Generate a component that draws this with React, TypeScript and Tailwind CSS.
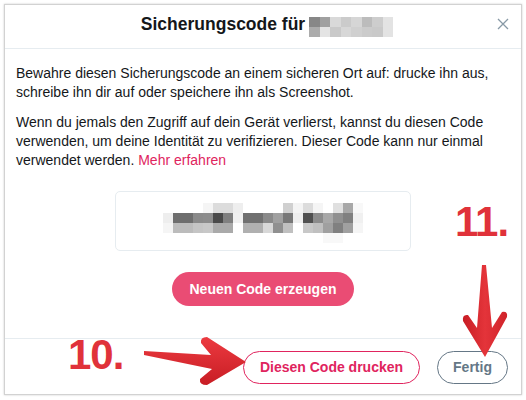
import React from "react";

const titleBlob: string[][] = [
  ["#878787", "#a0a0a0", "#d9d9d9", "#cbcbcb", "#d6d6d6", "#bcbcbc", "#cdcdcd", "#e3e3e3"],
  ["#ababab", "#e4e4e4", "#c9c9c9", "#d7d7d7", "#d0d0d0", "#cbcbcb", "#c9c9c9", "#e3e3e3"],
];

const codeBlob: string[][] = [
  ["#fff", "#fff", "#fff", "#fff", "#f5f5f5", "#dcdcdc", "#dcdcdc", "#eeeeee", "#fff", "#fff", "#fff", "#fff", "#d0d0d0", "#f4f4f4", "#dcdcdc", "#f5f5f5", "#fff", "#e0e0e0", "#a8a8a8", "#f8f8f8"],
  ["#eeeeee", "#6e6e6e", "#6e6e6e", "#8a8a8a", "#8c8c8c", "#4a4a4a", "#808080", "#f0f0f0", "#707070", "#707070", "#8a8a8a", "#a0a0a0", "#787878", "#eeeeee", "#505050", "#8c8c8c", "#a8a8a8", "#909090", "#808080", "#f0f0f0"],
  ["#f5f5f5", "#bcbcbc", "#bcbcbc", "#c5c5c5", "#c8c8c8", "#aaaaaa", "#aaaaaa", "#ffffff", "#b0b0b0", "#b0b0b0", "#d8d8d8", "#909090", "#c0c0c0", "#ffffff", "#c8c8c8", "#c0c0c0", "#a0a0a0", "#808080", "#a0a0a0", "#f5f5f5"],
  ["#fff", "#fff", "#fff", "#fff", "#fff", "#fff", "#fff", "#fff", "#fff", "#fff", "#fff", "#fff", "#fff", "#fff", "#fff", "#fff", "#f8f8f8", "#f8f8f8", "#fff", "#fff"],
];

function Blob({ rows, cw, ch }: { rows: string[][]; cw: number; ch: number }) {
  return (
    <div className="flex flex-col">
      {rows.map((r, i) => (
        <div key={i} className="flex">
          {r.map((c, j) => (
            <div key={j} style={{ width: cw, height: ch, background: c }} />
          ))}
        </div>
      ))}
    </div>
  );
}

export default function App() {
  return (
    <div className="relative w-[526px] h-[400px] bg-white overflow-hidden font-['Liberation_Sans',Arial,sans-serif] text-[#14171a]">
      <div className="ml-[4px] mt-[4px] w-[518px] h-[391px] border border-[#d2d2d2] shadow-[0_0_2px_rgba(0,0,0,0.2)] flex flex-col bg-white">
        {/* header */}
        <div className="h-[44px] shrink-0 border-b border-[#e6ecf0] grid grid-cols-[1fr_auto_1fr] items-center pb-[3px]">
          <div />
          <div className="flex items-center gap-[4px] pl-[8px]">
            <span className="text-[17.5px] font-bold leading-none">Sicherungscode für</span>
            <div className="mt-[4px]">
              <Blob rows={titleBlob} cw={10.5} ch={10} />
            </div>
          </div>
          <div className="flex justify-end pr-[12px]">
            <svg width="12" height="12" viewBox="0 0 12 12" className="-mt-[2px]">
              <path d="M1 1 L11 11 M11 1 L1 11" stroke="#8899a6" strokeWidth="1.3" fill="none" />
            </svg>
          </div>
        </div>

        {/* body */}
        <div className="flex-1 flex flex-col pl-[11px] pr-[11px] pt-[15px] text-[14px] leading-[19px]">
          <p>Bewahre diesen Sicherungscode an einem sicheren Ort auf: drucke ihn aus, schreibe ihn dir auf oder speichere ihn als Screenshot.</p>
          <p className="mt-[11px]">
            Wenn du jemals den Zugriff auf dein Gerät verlierst, kannst du diesen Code verwenden, um deine Identität zu verifizieren. Dieser Code kann nur einmal verwendet werden. <span className="text-[#e0245e]">Mehr erfahren</span>
          </p>
          <div className="mt-[21px] self-center w-[296px] h-[60px] border border-[#e6ecf0] rounded-[5px] flex items-center justify-center">
            <div className="mt-[4px]">
              <Blob rows={codeBlob} cw={10} ch={10} />
            </div>
          </div>
          <div className="mt-[21px] self-center w-[182px] h-[34px] rounded-full bg-[#ea4c74] text-white font-bold text-[14px] flex items-center justify-center">
            Neuen Code erzeugen
          </div>
        </div>

        {/* footer */}
        <div className="h-[56px] shrink-0 border-t border-[#e6ecf0] flex justify-end items-start pt-[12px] pr-[13px] gap-[17px]">
          <div className="w-[177px] h-[33px] rounded-full border border-[#e0245e] text-[#e0245e] font-bold text-[14px] flex items-center justify-center">
            Diesen Code drucken
          </div>
          <div className="w-[71px] h-[33px] rounded-full border border-[#657786] text-[#657786] font-bold text-[14px] flex items-center justify-center">
            Fertig
          </div>
        </div>
      </div>

      {/* annotations */}
      <svg className="absolute inset-0 pointer-events-none" width="526" height="400" viewBox="0 0 526 400">
        <defs>
          <linearGradient id="g1" x1="0" y1="0" x2="0" y2="1">
            <stop offset="0" stopColor="#ec3a40" />
            <stop offset="1" stopColor="#c81d24" />
          </linearGradient>
          <linearGradient id="g2" x1="0" y1="0" x2="1" y2="0">
            <stop offset="0" stopColor="#c81d24" />
            <stop offset="0.5" stopColor="#e4343a" />
            <stop offset="1" stopColor="#d0232a" />
          </linearGradient>
        </defs>
        <path
          d="M144 351 L211 355 L201 343 Q200 337 207 337 L246 362 L207 385 Q199 385 200 379 L212 369 L144 355 Z"
          fill="url(#g1)"
          strokeLinejoin="round"
        />
        <path
          d="M482 265 L486 265 L492 328 L502 312 Q508 311 507 317 L485 357 L463 321 Q462 314 468 315 L477 328 Z"
          fill="url(#g2)"
          strokeLinejoin="round"
        />
      </svg>
      <span className="absolute left-[68px] top-[334px] text-[42px] leading-none font-bold text-[#e0323a] tracking-[-1px]">10.</span>
      <span className="absolute left-[455px] top-[201px] text-[42px] leading-none font-bold text-[#e0323a] tracking-[-1px]">11.</span>
    </div>
  );
}
